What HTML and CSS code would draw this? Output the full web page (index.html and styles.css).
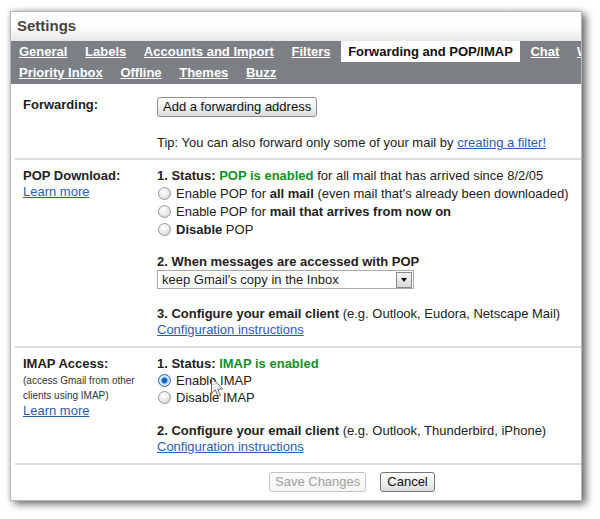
FILE: index.html
```html
<!DOCTYPE html>
<html>
<head>
<meta charset="utf-8">
<title>Settings</title>
<link rel="stylesheet" href="styles.css">
</head>
<body>
<div class="page">
  <div class="window">
    <div class="title">Settings</div>
    <div class="tabs">
      <div class="tabrow"><a class="tab" href="#">General</a> <a class="tab" href="#">Labels</a> <a class="tab" href="#">Accounts and Import</a> <a class="tab" href="#">Filters</a> <span class="tab active">Forwarding and POP/IMAP</span> <a class="tab" href="#">Chat</a> <a class="tab" href="#">Web Clips</a></div>
      <div class="tabrow"><a class="tab" href="#">Priority Inbox</a> <a class="tab" href="#">Offline</a> <a class="tab" href="#">Themes</a> <a class="tab" href="#">Buzz</a></div>
    </div>

    <div class="section first">
      <div class="label"><b>Forwarding:</b></div>
      <div class="value">
        <button class="btn">Add a forwarding address</button>
        <div class="tip">Tip: You can also forward only some of your mail by <a href="#">creating a filter!</a></div>
      </div>
    </div>

    <div class="section">
      <div class="label">
        <div class="line"><b>POP Download:</b></div>
        <div class="line"><a href="#">Learn more</a></div>
      </div>
      <div class="value">
        <div class="line"><b>1. Status: <span class="ok">POP is enabled</span></b> for all mail that has arrived since 8/2/05</div>
        <div class="radios">
          <label class="radio"><span class="dot"></span><span>Enable POP for <b>all mail</b> (even mail that's already been downloaded)</span></label>
          <label class="radio"><span class="dot"></span><span>Enable POP for <b>mail that arrives from now on</b></span></label>
          <label class="radio"><span class="dot"></span><span><b>Disable</b> POP</span></label>
        </div>
        <div class="line head"><b>2. When messages are accessed with POP</b></div>
        <div class="select"><span class="select-text">keep Gmail's copy in the Inbox</span><span class="select-arrow"><span class="tri"></span></span></div>
        <div class="line head2"><b>3. Configure your email client</b> (e.g. Outlook, Eudora, Netscape Mail)</div>
        <div class="line"><a href="#">Configuration instructions</a></div>
      </div>
    </div>

    <div class="section">
      <div class="label">
        <div class="line"><b>IMAP Access:</b></div>
        <div class="small">
          <div>(access Gmail from other</div>
          <div>clients using IMAP)</div>
        </div>
        <div class="line"><a href="#">Learn more</a></div>
      </div>
      <div class="value">
        <div class="line"><b>1. Status: <span class="ok">IMAP is enabled</span></b></div>
        <div class="radios tight">
          <label class="radio"><span class="dot on"></span><span>Enable IMAP</span></label>
          <label class="radio"><span class="dot"></span><span>Disable IMAP</span></label>
        </div>
        <div class="line head2"><b>2. Configure your email client</b> (e.g. Outlook, Thunderbird, iPhone)</div>
        <div class="line"><a href="#">Configuration instructions</a></div>
      </div>
    </div>

    <div class="footer">
      <button class="btn disabled">Save Changes</button>
      <button class="btn strong">Cancel</button>
    </div>
  </div>

  <svg class="cursor" width="13" height="21" viewBox="0 0 13 21">
    <path d="M0.5 0.5 L0.5 16.5 L4.3 12.8 L7 19.3 L9.4 18.3 L6.8 12 L11.8 12 Z" fill="#f2f2f2" stroke="#555" stroke-width="1" stroke-linejoin="round"/>
  </svg>
</div>
</body>
</html>
```

FILE: styles.css
```css
html, body {
  margin: 0;
  padding: 0;
  background: #fff;
}

body {
  font-family: "Liberation Sans", Arial, sans-serif;
  font-size: 13px;
  color: #222;
}

.page {
  position: relative;
  width: 600px;
  height: 519px;
  padding: 11px 0 0 10px;
  box-sizing: border-box;
}

.window {
  width: 570px;
  border: 1px solid #b8b8b8;
  background: #fff;
  overflow: hidden;
  box-shadow: 4px 3px 8px rgba(0, 0, 0, 0.6), -1px -1px 4px rgba(0, 0, 0, 0.12);
}

.title {
  height: 29px;
  padding-left: 6px;
  font-size: 15px;
  font-weight: bold;
  line-height: 28px;
  color: #444;
  background: linear-gradient(to bottom, #ffffff 0%, #fcfcfc 55%, #e9e7e4 100%);
}

.tabs {
  background: #7c8085;
  padding: 0 0 1px 1px;
}

.tabrow {
  height: 21px;
  line-height: 21px;
  white-space: nowrap;
  overflow: hidden;
}

.tab {
  display: inline-block;
  padding: 0 7px;
  font-weight: bold;
  color: #fff;
  text-decoration: underline;
}

.tab.active {
  background: #fff;
  color: #111;
  text-decoration: none;
}

a {
  color: #2a5db0;
  text-decoration: underline;
}

.section {
  display: grid;
  grid-template-columns: 142px 1fr;
  margin-left: 4px;
  padding: 8px 0;
  border-top: 2px solid #dcdcdc;
}

.section.first {
  border-top: 0;
  padding: 13px 0 7px;
}

.label {
  padding-left: 8px;
  line-height: 16px;
}

.line {
  line-height: 16px;
  white-space: nowrap;
}

.ok {
  color: #16901f;
}

.btn {
  font-family: "Liberation Sans", Arial, sans-serif;
  font-size: 13px;
  height: 20px;
  padding: 0 5px;
  margin: 0;
  color: #111;
  border: 1px solid #8e8e8e;
  border-radius: 3px;
  background: linear-gradient(to bottom, #fdfdfd 0%, #f0f0f0 50%, #dcdcdc 100%);
  line-height: 18px;
}

.btn.disabled {
  color: #a0a0a0;
  border-color: #c4c4c4;
  background: linear-gradient(to bottom, #fdfdfd 0%, #f4f4f4 100%);
}

.btn.strong {
  padding: 0 6px;
  border-color: #777;
}

.tip {
  margin-top: 17px;
  line-height: 17px;
}

.radios .radio {
  display: flex;
  align-items: center;
  height: 18px;
  white-space: nowrap;
}

.radios.tight .radio {
  height: 17px;
}

.dot {
  width: 11px;
  height: 11px;
  margin: 0 5px 0 1px;
  border: 1px solid #9a9a9a;
  border-radius: 50%;
  background: radial-gradient(circle at 40% 35%, #ffffff 0%, #e6e6e6 55%, #c4c4c4 100%);
  flex: none;
}

.dot.on {
  border-color: #2e5f9c;
  background: radial-gradient(circle, #0f56b0 0, #1a6ad0 2.5px, #bfe0fb 3.5px, #e8f4ff 100%);
}

.head {
  margin-top: 16px;
}

.head2 {
  margin-top: 17px;
}

.select {
  display: flex;
  align-items: center;
  justify-content: space-between;
  width: 257px;
  height: 19px;
  box-sizing: border-box;
  border: 1px solid #a9a9a9;
  padding: 0 1px 0 4px;
  background: #fff;
}

.select-text {
  line-height: 17px;
}

.select-arrow {
  display: flex;
  align-items: center;
  justify-content: center;
  width: 14px;
  height: 14px;
  border: 1px solid #8a8a8a;
  background: linear-gradient(to bottom, #f6f6f6, #d9d9d9);
}

.tri {
  width: 0;
  height: 0;
  border-left: 3.5px solid transparent;
  border-right: 3.5px solid transparent;
  border-top: 4px solid #111;
}

.small {
  padding-top: 1px;
  font-size: 10px;
  line-height: 15px;
  color: #333;
}

.footer {
  margin-left: 4px;
  border-top: 2px solid #dcdcdc;
  padding: 7px 0 8px 254px;
  display: flex;
  gap: 14px;
}

.cursor {
  position: absolute;
  left: 211px;
  top: 377px;
  opacity: 0.85;
}
```
